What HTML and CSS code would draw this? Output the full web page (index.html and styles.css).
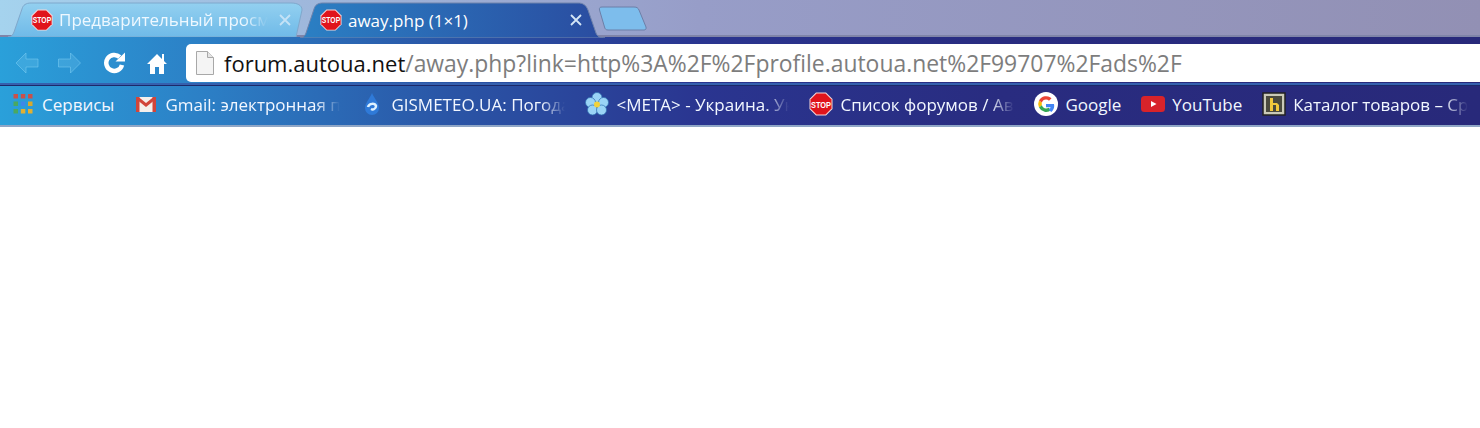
FILE: index.html
```html
<!DOCTYPE html>
<html lang="ru">
<head>
  <meta charset="UTF-8" />
  <title>away.php (1×1)</title>
  <link rel="stylesheet" href="styles.css">
</head>

<body>

<svg class="defs" width="0" height="0">
  <defs>
    <linearGradient id="tabLight" x1="0" y1="0" x2="0" y2="1">
      <stop offset="0" stop-color="#93d0f0" />
      <stop offset="1" stop-color="#6fbae8" />
    </linearGradient>
    <linearGradient id="tabDark" gradientUnits="userSpaceOnUse" x1="0" y1="0" x2="305" y2="0">
      <stop offset="0" stop-color="#2b80c4" />
      <stop offset="1" stop-color="#2a4ca0" />
    </linearGradient>
    <symbol id="stop" viewBox="0 0 24 24">
      <path d="M7 .5h10L23.500 7v10L17 23.500H7L.5 17V7z" fill="#f6d8d8" />
      <path d="M7.500 1.500h9L22.500 7.500v9L16.500 22.500h-9L1.500 16.500v-9z" fill="#e0141c" />
      <text class="stop-text" x="12" y="15.500" text-anchor="middle" textLength="20" lengthAdjust="spacingAndGlyphs">STOP</text>
    </symbol>
  </defs>
</svg>

<header class="browser">
  <div class="tabstrip">
    <div class="tab tab-back">
      <svg class="tab-bg" width="300" height="35" viewBox="0 0 300 35">
        <path d="M0 35C3 35 5 33 6 30L14 7C15 3 18 1 23 1H283C289 1 294 3 294 8L288 35Z" fill="url(#tabLight)" stroke="#7fa8cc" />
      </svg>
      <svg class="favicon"><use href="#stop" /></svg>
      <span class="tab-title fade">Предварительный просмотр</span>
      <svg class="close" viewBox="0 0 12 12"><path d="M1 1l10 10M11 1L1 11" /></svg>
    </div>
    <div class="tab tab-front">
      <svg class="tab-bg" width="305" height="36" viewBox="0 0 305 36">
        <path d="M0 36C3 36 5 34 6 31L14 7C15 3 18 1 23 1H278C283 1 286 3 288 8L296 31C297 34 300 36 305 36Z" fill="url(#tabDark)" stroke="#6f83ac" />
      </svg>
      <svg class="favicon"><use href="#stop" /></svg>
      <span class="tab-title">away.php (1×1)</span>
      <svg class="close" viewBox="0 0 12 12"><path d="M1 1l10 10M11 1L1 11" /></svg>
    </div>
    <svg class="new-tab" width="49" height="25" viewBox="0 0 49 25">
      <path d="M4 1H36C39 1 40 2 41 4L48 21C48.500 23 47.500 24 46 24H10C8 24 7 23 6.500 21L1.500 4C1 2 2 1 4 1Z" fill="#7dbdec" stroke="#6c7fa8" />
    </svg>
  </div>

  <div class="toolbar">
    <svg class="nav nav-back" width="24" height="22" viewBox="0 0 24 22">
      <path d="M11 1L1 11l10 10v-6h12V7H11z" />
    </svg>
    <svg class="nav nav-forward" width="25" height="22" viewBox="0 0 24 22">
      <path d="M13 1l10 10-10 10v-6H1V7h12z" />
    </svg>
    <svg class="nav nav-reload" width="22" height="22" viewBox="0 0 22 22">
      <path d="M19 13a8 8 0 1 1-2.300-8" fill="none" stroke="#fff" stroke-width="4.500" />
      <path d="M12.500 9.500L22 .5v9z" fill="#fff" />
    </svg>
    <svg class="nav nav-home" width="20" height="21" viewBox="0 0 20 21">
      <path d="M10 1L0 11h3v10h5v-7h4v7h5V11h3l-3-3V1h-2v5z" fill="#fff" />
    </svg>
    <div class="omnibox">
      <svg class="page-icon" width="18" height="24" viewBox="0 0 18 24">
        <path d="M.5.5h11l6 6v17H.5z" fill="#f4f4f4" stroke="#a8a8a8" />
        <path d="M11.500.5v6h6" fill="#e4e4e4" stroke="#a8a8a8" />
      </svg>
      <div class="url"><span class="url-host">forum.autoua.net</span>/away.php?link=http%3A%2F%2Fprofile.autoua.net%2F99707%2Fads%2F</div>
    </div>
  </div>

  <nav class="bookmarks">
    <a class="bookmark">
      <svg class="favicon" viewBox="0 0 24 24">
        <g fill="#c9504a"><rect x="2.500" y="2" width="4.500" height="4.500" /><rect x="9.800" y="2" width="4.500" height="4.500" /><rect x="17" y="2" width="4.500" height="4.500" /></g>
        <rect x="2.500" y="9.500" width="4.500" height="4.500" fill="#4aa860" />
        <rect x="9.800" y="9.500" width="4.500" height="4.500" fill="#3f87e8" />
        <rect x="17" y="9.500" width="4.500" height="4.500" fill="#d8a92c" />
        <rect x="2.500" y="17" width="4.500" height="4.500" fill="#4aa860" />
        <rect x="9.800" y="17" width="4.500" height="4.500" fill="#e2b030" />
        <rect x="17" y="17" width="4.500" height="4.500" fill="#e2b030" />
      </svg>
      <span>Сервисы</span>
    </a>
    <a class="bookmark">
      <svg class="favicon" viewBox="0 0 24 24">
        <path d="M2 5h20v15H2z" fill="#f4efec" />
        <path d="M2 5h3.500v15H2zM18.500 5H22v15h-3.500z" fill="#d1453a" />
        <path d="M2 5h2.500L12 11l7.500-6H22v2l-10 8L2 7z" fill="#d1453a" />
      </svg>
      <span class="fade label-gmail">Gmail: электронная почта</span>
    </a>
    <a class="bookmark">
      <svg class="favicon" viewBox="0 0 24 24">
        <path d="M12 1C10 6 5 11 5 16a7 7 0 0 0 14 0c0-5-5-10-7-15z" fill="#2f7ad8" />
        <path d="M8 15c1-4 7-4 8-1 0 3-3 4-5 3" fill="none" stroke="#dff2ff" stroke-width="2.500" />
      </svg>
      <span class="fade label-gismeteo">GISMETEO.UA: Погода в Украине</span>
    </a>
    <a class="bookmark">
      <svg class="favicon" viewBox="0 0 24 24">
        <g fill="#9ad4f6" stroke="#2c6fb0" stroke-width=".7">
          <circle cx="12" cy="5.500" r="5" /><circle cx="5.500" cy="10.500" r="5" /><circle cx="18.500" cy="10.500" r="5" /><circle cx="7.500" cy="18" r="5" /><circle cx="16.500" cy="18" r="5" />
        </g>
        <circle cx="12" cy="12.500" r="3" fill="#f2d23c" />
      </svg>
      <span class="fade label-meta">&lt;META&gt; - Украина. Украинский</span>
    </a>
    <a class="bookmark">
      <svg class="favicon"><use href="#stop" /></svg>
      <span class="fade label-forums">Список форумов / Автофорум</span>
    </a>
    <a class="bookmark">
      <svg class="favicon" viewBox="0 0 24 24">
        <circle cx="12" cy="12" r="12" fill="#fff" />
        <path d="M12 7.500a4.500 4.500 0 0 1 3 1.200l2.500-2.500A8 8 0 0 0 5 8.500l2.900 2.200A4.500 4.500 0 0 1 12 7.500z" fill="#ea4335" />
        <path d="M7.900 10.700L5 8.500a8 8 0 0 0 0 7l2.900-2.200a4.500 4.500 0 0 1 0-2.600z" fill="#fbbc05" />
        <path d="M12 16.500a4.500 4.500 0 0 1-4.100-3.200L5 15.500A8 8 0 0 0 17.300 18l-2.700-2.200a4.500 4.500 0 0 1-2.600.7z" fill="#34a853" />
        <path d="M20 12h-8v3.200h4.600a4 4 0 0 1-2 2.600l2.700 2.200A8 8 0 0 0 20 12z" fill="#4285f4" />
      </svg>
      <span>Google</span>
    </a>
    <a class="bookmark">
      <svg class="favicon" viewBox="0 0 24 24">
        <rect y="4" width="24" height="16" rx="3.500" fill="#d8232a" />
        <path d="M10 9l5.500 3-5.500 3z" fill="#fff" />
      </svg>
      <span>YouTube</span>
    </a>
    <a class="bookmark">
      <svg class="favicon" viewBox="0 0 24 24">
        <rect x="1" y="1" width="22" height="22" fill="#c9c9b8" stroke="#222" stroke-width="1.500" />
        <rect x="4" y="4" width="16" height="16" fill="#4a4a3e" />
        <path d="M8 6h3v5h4l2 2v6h-3v-6h-3v6H8z" fill="#f2c93c" />
      </svg>
      <span class="fade label-catalog">Каталог товаров – Сравнить цены</span>
    </a>
  </nav>
</header>

</body>
</html>
```

FILE: styles.css
```css
body {
  margin: 0;
  background: #fff;
  font-family: "Open Sans", "Noto Sans", sans-serif;
}

.defs {
  display: block;
  height: 0;
}

.stop-text {
  font-family: "Liberation Sans", sans-serif;
  font-size: 9.500px;
  font-weight: bold;
  fill: #fff;
}

.browser {
  border-bottom: 2px solid #8fa6c6;
}

.tabstrip {
  display: flex;
  align-items: flex-start;
  height: 37px;
  padding-left: 8px;
  background: linear-gradient(90deg, #a5d3ee 0, #9fb8dc 300px, #979dc8 700px, #9290b4 100%);
  box-shadow: inset 0 -2px 0 #7f84a8;
}

.tab {
  position: relative;
  display: flex;
  align-items: center;
  box-sizing: border-box;
  height: 35px;
  margin-top: 2px;
}

.tab-bg {
  position: absolute;
  top: 0;
  left: 0;
}

.tab-back {
  width: 292px;
  padding: 0 9px 0 23px;
  color: #eef8ff;
}

.tab-front {
  width: 305px;
  height: 36px;
  padding: 0 23px 0 20px;
  color: #fff;
}

.tab .favicon {
  position: relative;
  flex: none;
  width: 22px;
  height: 22px;
}

.tab-title {
  position: relative;
  flex: 1;
  margin: 0 11px 0 6px;
  font-size: 17px;
  white-space: nowrap;
  overflow: hidden;
}

.close {
  position: relative;
  flex: none;
  width: 12px;
  height: 12px;
  fill: none;
  stroke: #d4e6f6;
  stroke-width: 1.800;
}

.tab-back .close {
  stroke: #c4e2f6;
}

.new-tab {
  margin: 6px 0 0 -7px;
}

.fade {
  white-space: nowrap;
  overflow: hidden;
  -webkit-mask-image: linear-gradient(90deg, #000 calc(100% - 24px), transparent);
  mask-image: linear-gradient(90deg, #000 calc(100% - 24px), transparent);
}

.toolbar,
.bookmarks {
  background: linear-gradient(90deg, #2aa0da 0, #2c80c6 200px, #2a55a6 450px, #2a3590 700px, #292c80 1000px, #28297a 100%);
  background-attachment: fixed;
}

.toolbar {
  display: flex;
  align-items: center;
  height: 46px;
  box-sizing: border-box;
  padding: 7px 0 1px 15px;
}

.nav {
  flex: none;
}

.nav-back,
.nav-forward {
  fill: rgba(130, 210, 245, 0.22);
  stroke: rgba(130, 210, 245, 0.5);
}

.nav-forward {
  margin-left: 18px;
}

.nav-reload {
  margin-left: 21px;
}

.nav-home {
  margin-left: 22px;
}

.omnibox {
  flex: 1;
  display: flex;
  align-items: center;
  height: 38px;
  margin-left: 19px;
  padding-left: 10px;
  background: #fff;
  border-radius: 5px 0 0 5px;
  font-size: 22.900px;
  color: #7d7d7d;
}

.url {
  margin-left: 10px;
  white-space: nowrap;
}

.url-host {
  font-size: 22px;
  color: #111;
}

.bookmarks {
  display: flex;
  align-items: center;
  gap: 20px;
  height: 42px;
  box-sizing: border-box;
  padding: 0 0 2px 11px;
  border-top: 2px solid #3560ae;
  box-shadow: inset 0 1px 0 #1c2a6a;
  font-size: 17px;
  color: #f2f7ff;
}

.bookmark {
  display: flex;
  align-items: center;
  gap: 7px;
}

.bookmark .favicon {
  flex: none;
  width: 24px;
  height: 24px;
}

.label-gmail { width: 175px; }
.label-gismeteo { width: 174px; }
.label-meta { width: 173px; }
.label-forums { width: 174px; }
.label-catalog { width: 175px; }
```
